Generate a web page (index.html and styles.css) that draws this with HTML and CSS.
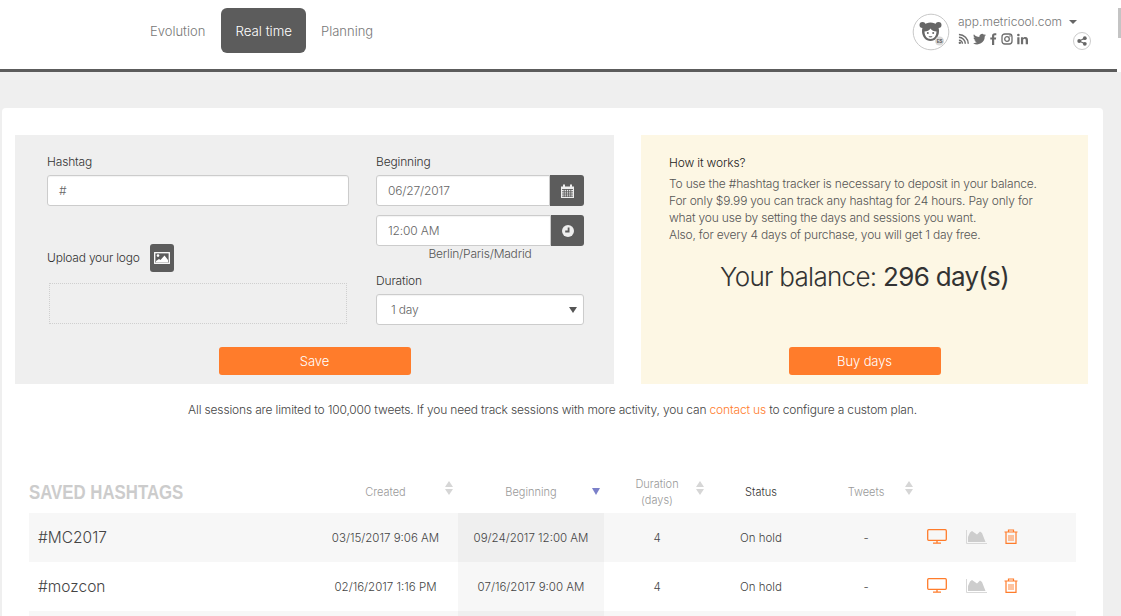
FILE: index.html
```html
<!DOCTYPE html>
<html lang="en">
<head>
<meta charset="utf-8">
<title>Hashtag tracker</title>
<link rel="stylesheet" href="styles.css">
</head>
<body>
<header class="topbar">
  <div class="topbar-main">
    <nav class="tabs">
      <a class="tab">Evolution</a>
      <a class="tab tab-active">Real time</a>
      <a class="tab">Planning</a>
    </nav>
    <div class="account">
      <div class="avatar">
        <svg viewBox="0 0 38 38" width="38" height="38">
          <circle cx="19" cy="19" r="17.8" fill="#fff" stroke="#c8c8c8" stroke-width="1"/>
          <circle cx="10.5" cy="12" r="3" fill="#666"/>
          <circle cx="26.5" cy="12" r="3" fill="#666"/>
          <path d="M18.5 9.5c-5.5 0-8.5 3.5-8.5 8.5 0 6 3.8 10 8.5 10s8.500-4 8.500-10c0-5-3-8.500-8.500-8.500z" fill="#666"/>
          <path d="M12.500 18.500c2.500 0 5-1 6-3 1 2 3.500 3 6 3 0 4.500-2.500 7.500-6 7.500s-6-3-6-7.500z" fill="#fff"/>
          <circle cx="15.800" cy="20" r="1" fill="#666"/>
          <circle cx="21.200" cy="20" r="1" fill="#666"/>
          <path d="M16.500 23h4c-.5 1.200-1.200 1.600-2 1.600s-1.500-.4-2-1.600z" fill="#888"/>
          <circle cx="27.500" cy="28" r="4.500" fill="#d8d8d8"/>
          <text x="27.500" y="30" class="avatar-tag">ES</text>
        </svg>
      </div>
      <div class="account-info">
        <div class="account-name">app.metricool.com <span class="caret"></span></div>
        <div class="socials">
          <svg viewBox="0 0 12 12" width="11" height="12"><path d="M1 4.200a7 7 0 0 1 7 7M1 1a10.200 10.200 0 0 1 10.200 10.200M1 7.400a3.800 3.800 0 0 1 3.800 3.800" fill="none" stroke="#6e6e6e" stroke-width="1.600"/><circle cx="2" cy="10.200" r="1.300" fill="#6e6e6e"/></svg>
          <svg viewBox="0 0 14 12" width="13" height="12"><path d="M14 1.700c-.5.200-1 .4-1.600.4.600-.3 1-.9 1.200-1.500-.5.300-1.100.6-1.800.7A2.900 2.900 0 0 0 6.900 3.900C4.500 3.800 2.400 2.700 1 .9c-.8 1.300-.4 3 .9 3.800-.5 0-.9-.1-1.300-.3 0 1.400 1 2.600 2.300 2.900-.4.100-.9.100-1.300 0 .4 1.100 1.400 2 2.700 2A5.800 5.800 0 0 1 0 10.500 8.200 8.200 0 0 0 12.600 3.200c.6-.4 1-.9 1.400-1.500z" fill="#6e6e6e"/></svg>
          <svg viewBox="0 0 7 12" width="7" height="12"><path d="M2 12V6.500H.3V4.400H2V3C2 1.200 3.100.2 4.700.2c.8 0 1.400.1 1.600.1v1.900H5.200c-.9 0-1 .4-1 1v1.200h2l-.3 2.100H4.200V12z" fill="#6e6e6e"/></svg>
          <svg viewBox="0 0 12 12" width="12" height="12"><rect x="1" y="1" width="10" height="10" rx="2.800" fill="none" stroke="#6e6e6e" stroke-width="1.300"/><circle cx="6" cy="6" r="2.300" fill="none" stroke="#6e6e6e" stroke-width="1.300"/><circle cx="9" cy="3" r=".8" fill="#6e6e6e"/></svg>
          <svg viewBox="0 0 12 12" width="11" height="12"><path d="M.3 4h2.400v7.700H.3zM1.500.3a1.400 1.400 0 1 1 0 2.800 1.400 1.400 0 0 1 0-2.800zM4.300 4h2.300v1c.4-.7 1.200-1.300 2.400-1.300 2.500 0 3 1.600 3 3.800v4.200H9.500V7.900c0-.9 0-2.100-1.300-2.100s-1.500 1-1.500 2v3.900H4.300z" fill="#6e6e6e"/></svg>
        </div>
      </div>
      <div class="share">
        <svg viewBox="0 0 10 10" width="10" height="10"><path d="M7.800 2.200 2.200 5l5.600 2.800" fill="none" stroke="#666" stroke-width="1.100"/><circle cx="7.800" cy="2.200" r="1.900" fill="#666"/><circle cx="2.200" cy="5" r="1.900" fill="#666"/><circle cx="7.800" cy="7.800" r="1.900" fill="#666"/></svg>
      </div>
    </div>
  </div>
  <div class="scroll-track"><span class="scroll-thumb"></span></div>
</header>

<main class="card">
  <section class="panels">
    <form class="panel panel-form">
      <div class="form-cols">
        <div class="col-left">
          <label class="label">Hashtag</label>
          <div class="input input-hash">#</div>
          <div class="upload-row">
            <span class="upload-text">Upload your logo</span>
            <span class="icon-btn">
              <svg viewBox="0 0 16 12" width="16" height="12"><rect x=".7" y=".7" width="14.600" height="10.600" fill="none" stroke="#fff" stroke-width="1.300"/><circle cx="4" cy="3.600" r="1.300" fill="#fff"/><path d="M2 10.500V9l3-2 1.500 1L10.500 3.500 14 8v2.500z" fill="#fff"/></svg>
            </span>
          </div>
          <div class="dropzone"></div>
        </div>
        <div class="col-right">
          <label class="label">Beginning</label>
          <div class="group">
            <div class="input group-input">06/27/2017</div>
            <span class="addon">
              <svg viewBox="0 0 13 14" width="13" height="14"><path d="M0 2.500h13V14H0z" fill="#eee"/><path d="M3 .5v3M10 .5v3" stroke="#eee" stroke-width="2"/><path d="M1 5.500h11M1 7.800h11M1 10h11M1 12.200h11M3.200 5v8M5.400 5v8M7.600 5v8M9.800 5v8" stroke="#5c5c5c" stroke-width=".9"/></svg>
            </span>
          </div>
          <div class="group group-time">
            <div class="input group-input">12:00 AM</div>
            <span class="addon addon-time">
              <svg viewBox="0 0 12 12" width="12" height="12"><circle cx="6" cy="6" r="6" fill="#eee"/><path d="M6.600 2.600v3.900H3.200" fill="none" stroke="#5c5c5c" stroke-width="1.800"/></svg>
            </span>
          </div>
          <div class="timezone">Berlin/Paris/Madrid</div>
          <label class="label label-duration">Duration</label>
          <div class="input select">1 day<span class="select-arrow"></span></div>
        </div>
      </div>
      <div class="panel-action"><button type="button" class="btn btn-save">Save</button></div>
    </form>
    <aside class="panel panel-info">
      <div class="info-text">
        <h3 class="info-title">How it works?</h3>
        <p class="info-copy">To use the #hashtag tracker is necessary to deposit in your balance.<br>For only $9.99 you can track any hashtag for 24 hours. Pay only for<br>what you use by setting the days and sessions you want.<br>Also, for every 4 days of purchase, you will get 1 day free.</p>
      </div>
      <div class="balance">Your balance: <span class="balance-num">296 day(s)</span></div>
      <div class="panel-action"><button type="button" class="btn btn-buy">Buy days</button></div>
    </aside>
  </section>

  <p class="note">All sessions are limited to 100,000 tweets. If you need track sessions with more activity, you can <a class="link">contact us</a> to configure a custom plan.</p>

  <table class="table">
    <colgroup>
      <col class="c-name"><col class="c-created"><col class="c-begin"><col class="c-dur"><col class="c-status"><col class="c-tweets"><col class="c-actions">
    </colgroup>
    <thead>
      <tr>
        <th class="th-title"><span class="title-text">SAVED HASHTAGS</span></th>
        <th class="sortable">Created<span class="sort sort-a"></span></th>
        <th class="sortable">Beginning<span class="sort-down"></span></th>
        <th class="sortable">Duration<br>(days)<span class="sort sort-b"></span></th>
        <th class="th-dark">Status</th>
        <th class="sortable">Tweets<span class="sort sort-c"></span></th>
        <th></th>
      </tr>
    </thead>
    <tbody>
      <tr class="row-odd">
        <td class="td-name">#MC2017</td><td>03/15/2017 9:06 AM</td><td class="td-sorted">09/24/2017 12:00 AM</td><td>4</td><td>On hold</td><td>-</td>
        <td class="td-actions">
          <div class="actions">
            <svg class="ico-screen" viewBox="0 0 20 15" width="20" height="15"><rect x=".7" y=".7" width="18.600" height="10.600" rx="1" fill="none" stroke="#ff7c2b" stroke-width="1.300"/><path d="M10 11.500v2.500M6 14.200h8" stroke="#ff7c2b" stroke-width="1.300"/></svg>
            <svg class="ico-chart" viewBox="0 0 21 15" width="21" height="15"><path d="M.5 1v13.500H21" fill="none" stroke="#d8d8d8"/><path d="M2 13V8L4 3.500 6 2l5 3.500L14 2.500 16 4l3.500 9z" fill="#cdcdcd"/></svg>
            <svg viewBox="0 0 14 15" width="14" height="15"><path d="M.5 3h13M4.500 3V1h5v2M2 3v11.300h10V3" fill="none" stroke="#ff7c2b" stroke-width="1.200"/><path d="M5 6v6M7 6v6M9 6v6" fill="none" stroke="#ff7c2b" stroke-width=".9"/></svg>
          </div>
        </td>
      </tr>
      <tr>
        <td class="td-name">#mozcon</td><td>02/16/2017 1:16 PM</td><td class="td-sorted">07/16/2017 9:00 AM</td><td>4</td><td>On hold</td><td>-</td>
        <td class="td-actions">
          <div class="actions">
            <svg class="ico-screen" viewBox="0 0 20 15" width="20" height="15"><rect x=".7" y=".7" width="18.600" height="10.600" rx="1" fill="none" stroke="#ff7c2b" stroke-width="1.300"/><path d="M10 11.500v2.500M6 14.200h8" stroke="#ff7c2b" stroke-width="1.300"/></svg>
            <svg class="ico-chart" viewBox="0 0 21 15" width="21" height="15"><path d="M.5 1v13.500H21" fill="none" stroke="#d8d8d8"/><path d="M2 13V8L4 3.500 6 2l5 3.500L14 2.500 16 4l3.500 9z" fill="#cdcdcd"/></svg>
            <svg viewBox="0 0 14 15" width="14" height="15"><path d="M.5 3h13M4.500 3V1h5v2M2 3v11.300h10V3" fill="none" stroke="#ff7c2b" stroke-width="1.200"/><path d="M5 6v6M7 6v6M9 6v6" fill="none" stroke="#ff7c2b" stroke-width=".9"/></svg>
          </div>
        </td>
      </tr>
      <tr class="row-odd row-sliver">
        <td></td><td></td><td class="td-sorted"></td><td></td><td></td><td></td><td></td>
      </tr>
    </tbody>
  </table>
</main>
</body>
</html>
```

FILE: styles.css
```css
* { box-sizing: border-box; }
html, body { margin: 0; height: 100%; overflow: hidden; }
body {
  background: #efefef;
  font-family: Inter, "Liberation Sans", sans-serif;
  font-weight: 300;
  color: #444;
  font-size: 12px;
  letter-spacing: -.16px;
}

/* Top bar */
.topbar { display: flex; height: 72px; background: #fff; }
.topbar-main {
  flex: 1;
  display: flex;
  justify-content: space-between;
  border-bottom: 3px solid #5c5c5c;
}
.scroll-track { position: relative; width: 4px; }
.scroll-thumb {
  position: absolute;
  top: 8px; bottom: 34px; left: 1px; right: 0;
  background: #c4c4c4;
}
.tabs { display: flex; align-items: flex-start; padding: 8px 0 0 142px; }
.tab {
  display: block;
  height: 45px;
  line-height: 47px;
  padding: 0 15px;
  font-size: 13px;
  letter-spacing: 0;
  color: #777;
}
.tabs .tab:first-child { padding: 0 16px 0 8px; }
.tabs .tab-active {
  background: #5c5c5c;
  color: #fff;
  border-radius: 6px;
  font-size: 13.300px;
  padding: 0 14px;
}
.account { display: flex; align-items: flex-start; padding: 13px 26px 0 0; }
.avatar { width: 38px; height: 38px; margin-right: 8px; }
.avatar-tag { font: 700 4.500px "Liberation Sans", sans-serif; fill: #555; text-anchor: middle; }
.account-info { width: 118px; }
.account-name { font-size: 12px; line-height: 18px; color: #777; white-space: nowrap; letter-spacing: 0; }
.caret {
  display: inline-block;
  margin: 0 0 2px 4px;
  border: 4px solid transparent;
  border-top-color: #666;
  border-bottom: 0;
}
.socials { display: flex; align-items: center; gap: 4px; height: 15px; }
.share {
  width: 18px; height: 18px;
  margin: 19px 0 0 -3px;
  border: 1px solid #ccc;
  border-radius: 50%;
  display: flex; align-items: center; justify-content: center;
}

/* Card */
.card {
  margin: 36px 18px 0 2px;
  padding: 27px 13px 0;
  background: #fff;
  border-radius: 4px 4px 0 0;
  height: calc(100% - 108px);
  overflow: hidden;
}
.panels { display: flex; gap: 27px; height: 249px; }
.panel { position: relative; height: 249px; }
.panel-form { width: 599px; background: #efefef; padding: 17px 30px 0 32px; }
.panel-info { width: 447px; background: #fdf7e4; padding: 19px 28px 0; }
.panel-action {
  position: absolute;
  left: 0; right: 0; bottom: 9px;
  display: flex; justify-content: center;
}
.btn {
  height: 28px;
  padding: 0;
  border: 0;
  border-radius: 3px;
  background: #ff7c2b;
  color: #fff;
  font: 300 13px Inter, "Liberation Sans", sans-serif;
  letter-spacing: -.1px;
}
.btn-save { width: 192px; }
.btn-buy { width: 152px; }

/* Form */
.form-cols { display: flex; gap: 27px; }
.col-left { width: 302px; }
.col-right { width: 208px; }
.label { display: block; font-size: 12px; line-height: 19px; height: 23px; color: #333; }
.input {
  height: 31px;
  line-height: 29px;
  padding: 0 11px;
  background: #fff;
  border: 1px solid #ccc;
  border-radius: 3px;
  box-shadow: inset 0 1px 1px rgba(0, 0, 0, .05);
  font-size: 12px;
  color: #666;
}
.upload-row { display: flex; align-items: center; gap: 10px; height: 28px; margin-top: 38px; }
.upload-text { font-size: 12px; color: #333; margin-top: -2px; letter-spacing: -.2px; }
.icon-btn {
  width: 24px; height: 28px;
  background: #5c5c5c;
  border-radius: 3px;
  display: flex; align-items: center; justify-content: center;
}
.dropzone { width: 298px; height: 41px; margin: 11px 0 0 2px; border: 1px dotted #cfcfcf; }
.group { display: flex; height: 31px; }
.group-time { margin-top: 9px; }
.group-input { flex: 1; border-radius: 3px 0 0 3px; }
.addon {
  width: 34px;
  background: #5c5c5c;
  border-radius: 0 3px 3px 0;
  display: flex; align-items: center; justify-content: center;
}
.addon-time { width: 33px; }
.timezone { height: 17px; line-height: 16px; text-align: center; font-size: 12px; color: #555; letter-spacing: -.2px; }
.label-duration { margin-top: 9px; height: 22px; line-height: 18px; }
.select { position: relative; padding-left: 14px; }
.select-arrow {
  position: absolute;
  right: 6px; top: 12px;
  border: 4px solid transparent;
  border-top: 6px solid #555;
  border-bottom: 0;
}

/* Info */
.info-text { height: 108px; }
.info-title { margin: 0 0 4px; font-size: 12px; line-height: 17px; font-weight: 300; color: #222; }
.info-copy { margin: 0; font-size: 12px; line-height: 17px; color: #555; letter-spacing: -.18px; }
.balance { text-align: center; font-size: 26px; line-height: 30px; color: #333; margin: 0 -28px; letter-spacing: -.7px; }
.balance-num { font-weight: 400; }

/* Note */
.note { margin: 0; padding-top: 17px; height: 86px; text-align: center; font-size: 12px; line-height: 17px; color: #444; }
.link { color: #ff7c2b; }

/* Table */
.table { width: 1047px; margin-left: 14px; border-collapse: collapse; table-layout: fixed; letter-spacing: 0; }
.c-name { width: 284px; }
.c-created { width: 145px; }
.c-begin { width: 146px; }
.c-dur { width: 106px; }
.c-status { width: 102px; }
.c-tweets { width: 108px; }
.c-actions { width: 156px; }
.table th { height: 43px; padding: 0; font-size: 11px; line-height: 16px; font-weight: 300; color: #999; text-align: center; position: relative; }
.table th.th-title { text-align: left; padding-top: 2px; }
.title-text {
  display: inline-block;
  font: 700 20px "Liberation Sans", sans-serif;
  color: #cccccc;
  transform: scaleX(.84);
  transform-origin: left center;
  white-space: nowrap;
}
.table th.th-dark { color: #333; }
.sort { position: absolute; top: 11px; width: 9px; height: 14px; }
.sort::before, .sort::after {
  content: "";
  position: absolute;
  left: 0;
  border: 4.500px solid transparent;
}
.sort::before { top: 0; border-bottom: 6px solid #d6d6d6; border-top: 0; }
.sort::after { top: 8px; border-top: 6px solid #d6d6d6; border-bottom: 0; }
.sort-a { left: 132px; }
.sort-b { left: 92px; }
.sort-c { left: 93px; }
.sort-down {
  position: absolute;
  left: 134px; top: 18px;
  border: 4px solid transparent;
  border-top: 7px solid #7b80c9;
  border-bottom: 0;
}
.table td { height: 49px; padding: 0; font-size: 11.500px; text-align: center; color: #444; }
.table .row-sliver td { height: 5px; }
.table td.td-name { font-size: 15.500px; text-align: left; padding-left: 9px; color: #444; }
.row-odd td { background: #f7f7f7; }
.table td.td-sorted { background: #f7f7f7; }
.table .row-odd td.td-sorted { background: #efefef; }
.actions { display: flex; align-items: center; gap: 18px; padding: 0 0 2px 7px; }
.ico-chart { margin: 0 -1px 0 1px; }
```
